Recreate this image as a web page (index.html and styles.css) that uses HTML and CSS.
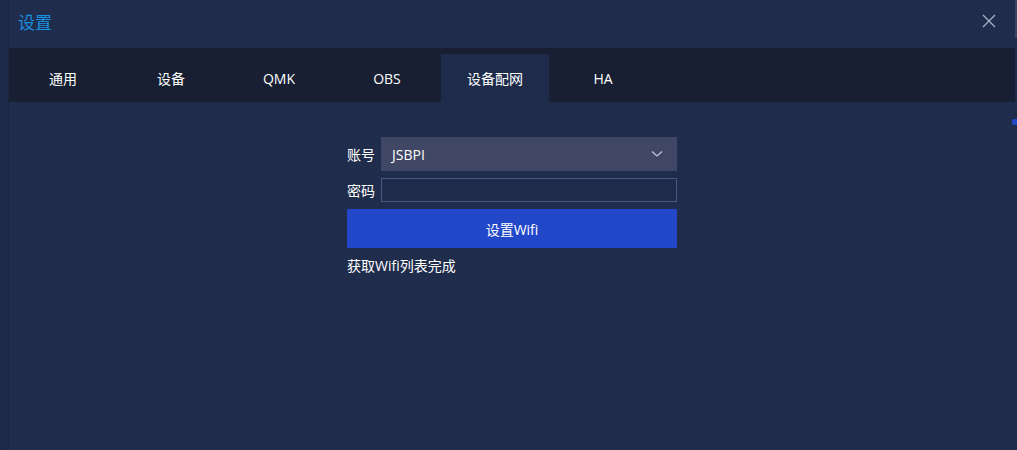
FILE: index.html
```html
<!DOCTYPE html>
<html lang="zh">
<head>
<meta charset="utf-8">
<link rel="stylesheet" href="styles.css">
</head>
<body>
<div class="frame">
  <div class="gutter"></div>
  <div class="dialog">
    <div class="titlebar">
      <span class="title">设置</span>
      <svg class="close" width="14" height="14" viewBox="0 0 14 14"><path d="M1 1L13 13M13 1L1 13" stroke="#aab2c8" stroke-width="1.3" fill="none"/></svg>
    </div>
    <div class="tabs">
      <div class="tab">通用</div>
      <div class="tab">设备</div>
      <div class="tab">QMK</div>
      <div class="tab">OBS</div>
      <div class="tab active">设备配网</div>
      <div class="tab">HA</div>
    </div>
    <div class="content">
      <div class="form">
        <div class="row">
          <span class="label">账号</span>
          <div class="select">
            <span>JSBPI</span>
            <svg width="12" height="8" viewBox="0 0 12 8"><path d="M1 1.5L6 6L11 1.5" stroke="#c4c8d8" stroke-width="1.2" fill="none"/></svg>
          </div>
        </div>
        <div class="row row-pw">
          <span class="label">密码</span>
          <div class="input"></div>
        </div>
        <div class="btn">设置Wifi</div>
        <div class="status">获取Wifi列表完成</div>
      </div>
    </div>
  </div>
  <div class="edge">
    <div class="edge-thumb"></div>
    <div class="edge-mark"></div>
  </div>
</div>
</body>
</html>
```
FILE: styles.css
```css
* { box-sizing: border-box; }
html, body { margin: 0; padding: 0; }
body {
  width: 1017px;
  height: 450px;
  overflow: hidden;
  background: #1e2b48;
  font-family: "Open Sans", "Noto Sans CJK SC", sans-serif;
  color: #ffffff;
}
.frame {
  display: flex;
  height: 450px;
}
.gutter {
  width: 9px;
  background: #1e2b48;
  border-right: 1px solid #1a2540;
}
.dialog {
  flex: 1;
  display: flex;
  flex-direction: column;
  background: #1f2c4b;
}
.titlebar {
  height: 48px;
  display: flex;
  align-items: center;
  justify-content: space-between;
  padding: 0 19px 0 9px;
}
.title {
  color: #1a8fe0;
  font-size: 17px;
  margin-top: -6px;
}
.close { margin-top: -6px; }
.tabs {
  height: 54px;
  background: #181f33;
  display: flex;
  align-items: flex-end;
}
.tab {
  width: 108px;
  height: 48px;
  display: flex;
  align-items: center;
  justify-content: center;
  font-size: 14px;
  color: #ffffff;
}
.tab.active { background: #1e2b4a; }
.content {
  flex: 1;
  display: flex;
  justify-content: center;
  padding-top: 35px;
}
.form {
  width: 330px;
  display: flex;
  flex-direction: column;
  font-size: 14px;
}
.row {
  display: flex;
  align-items: center;
}
.label {
  width: 34px;
  font-size: 14px;
}
.select {
  flex: 1;
  height: 34px;
  background: #3f4765;
  display: flex;
  align-items: center;
  justify-content: space-between;
  padding: 0 14px 0 11px;
  font-size: 14px;
}
.row-pw { margin-top: 7px; }
.input {
  flex: 1;
  height: 24px;
  border: 1px solid #4c5781;
  background: #1e2b4a;
}
.btn {
  margin-top: 7px;
  height: 39px;
  background: #2247c8;
  display: flex;
  align-items: center;
  justify-content: center;
  font-size: 14px;
}
.status {
  margin-top: 7px;
  font-size: 14px;
}
.edge {
  width: 2px;
  background: #1e2b48;
  position: relative;
}
.edge-thumb {
  height: 38px;
  background: #3a4560;
}
.edge-mark {
  position: absolute;
  top: 119px;
  left: -3px;
  width: 5px;
  height: 6px;
  background: #2247c8;
  border-radius: 2px 0 0 2px;
}
```
